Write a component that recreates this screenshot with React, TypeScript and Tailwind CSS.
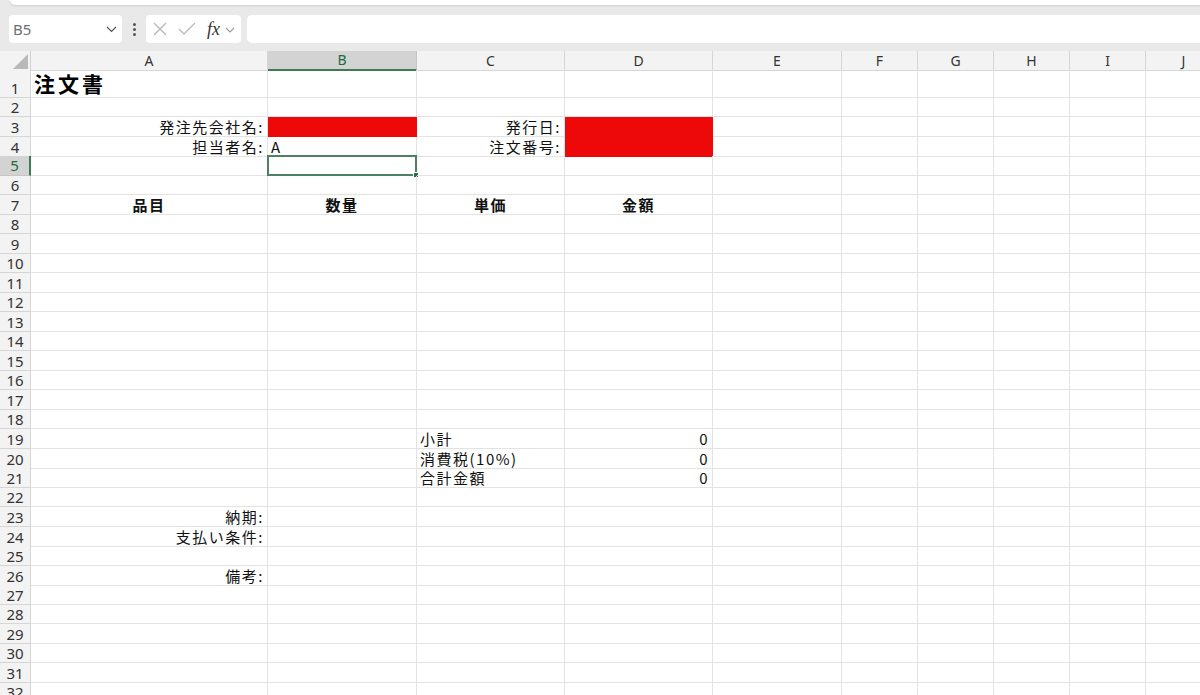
import React from "react"

type Cell = {
  t?: string
  a?: "l" | "r" | "c"
  b?: boolean
  title?: boolean
  red?: boolean
  merged?: boolean
  sel?: boolean
}

const COLS = ["A", "B", "C", "D", "E", "F", "G", "H", "I", "J"]
const GRID = "grid grid-cols-[31px_237px_149px_148px_148px_129px_76px_76px_76px_76px_76px]"

const cells: Record<string, Cell> = {
  A1: { t: "注文書", title: true },
  A3: { t: "発注先会社名:", a: "r" },
  B3: { red: true },
  C3: { t: "発行日:", a: "r" },
  D3: { red: true, merged: true },
  A4: { t: "担当者名:", a: "r" },
  B4: { t: "A" },
  C4: { t: "注文番号:", a: "r" },
  D4: { red: true },
  B5: { sel: true },
  A7: { t: "品目", a: "c", b: true },
  B7: { t: "数量", a: "c", b: true },
  C7: { t: "単価", a: "c", b: true },
  D7: { t: "金額", a: "c", b: true },
  C19: { t: "小計" },
  D19: { t: "0", a: "r" },
  C20: { t: "消費税(10%)" },
  D20: { t: "0", a: "r" },
  C21: { t: "合計金額" },
  D21: { t: "0", a: "r" },
  A23: { t: "納期:", a: "r" },
  A24: { t: "支払い条件:", a: "r" },
  A26: { t: "備考:", a: "r" },
}

function Chevron() {
  return (
    <svg width="11" height="7" viewBox="0 0 11 7" fill="none">
      <polyline points="1,1 5.5,5.5 10,1" stroke="#555" strokeWidth="1.2" />
    </svg>
  )
}

function Toolbar() {
  return (
    <div className="h-[51px] bg-[#e9e9e9] flex flex-col">
      <div className="h-[5px] ml-[10px] bg-white rounded-bl-[6px] shadow-[0_1px_2px_rgba(0,0,0,0.12)]" />
      <div className="flex items-center mt-[10px] h-[28px]">
        <div className="ml-[9px] w-[113px] h-full bg-white rounded-[4px] flex items-center justify-between pl-[4px] pr-[5px]">
          <span className="text-[15px] text-[#707070] font-['Noto_Sans',sans-serif]">B5</span>
          <Chevron />
        </div>
        <div className="w-[24px] flex flex-col items-center gap-[2px]">
          <span className="w-[3px] h-[3px] rounded-full bg-[#555]" />
          <span className="w-[3px] h-[3px] rounded-full bg-[#555]" />
          <span className="w-[3px] h-[3px] rounded-full bg-[#555]" />
        </div>
        <div className="w-[95px] h-full bg-white rounded-[4px] flex items-center pl-[7px]">
          <svg width="14" height="14" viewBox="0 0 14 14">
            <path d="M1 1 L13 13 M13 1 L1 13" stroke="#b5b5b5" strokeWidth="1.2" />
          </svg>
          <svg width="18" height="14" viewBox="0 0 18 14" className="ml-[11px]">
            <polyline points="1,7 6,12 17,1" fill="none" stroke="#b5b5b5" strokeWidth="1.2" />
          </svg>
          <span className="ml-[11px] italic text-[18px] leading-none text-[#333] font-['Liberation_Serif',serif]">fx</span>
          <span className="ml-[5px] mt-[1px]">
            <svg width="10" height="6" viewBox="0 0 10 6" fill="none">
              <polyline points="1,1 5,5 9,1" stroke="#999" strokeWidth="1.1" />
            </svg>
          </span>
        </div>
        <div className="ml-[6px] flex-1 h-full bg-white rounded-l-[5px]" />
      </div>
    </div>
  )
}

function HeaderRow() {
  return (
    <div className={GRID + " h-[19px]"}>
      <div className="bg-[#f3f3f3] border-r border-b border-[#d2d2d2] flex items-end justify-end pr-[2px] pb-[1px] overflow-hidden">
        <svg width="15" height="15" viewBox="0 0 15 15">
          <polygon points="15,0 15,15 0,15" fill="#b9b9b9" />
        </svg>
      </div>
      {COLS.map((c) => (
        <div
          key={c}
          className={
            c === "B"
              ? "bg-[#d3d3d3] border-r border-[#c6c6c6] border-b-2 border-b-[#3f7a57] flex items-center justify-center text-[14px] leading-[18px] text-[#1f6b3f] font-['Noto_Sans',sans-serif]"
              : "bg-[#f3f3f3] border-r border-b border-[#d6d6d6] flex items-center justify-center text-[14px] leading-[18px] text-[#333] font-['Noto_Sans',sans-serif]"
          }
        >
          {c}
        </div>
      ))}
    </div>
  )
}

function DataCell({ id }: { id: string }) {
  const c = cells[id]
  let cls = "relative flex items-center border-r border-b border-[#e3e3e3] overflow-visible whitespace-nowrap"
  if (c?.red) cls += " bg-[#ed0909] border-[#ed0909]"
  if (c?.merged) cls += " border-b-0"
  if (c?.title) cls += " items-end pb-[1px]"
  const align = c?.a === "r" ? " justify-end pr-[3px]" : c?.a === "c" ? " justify-center" : " justify-start pl-[3px]"
  cls += align
  return (
    <div className={cls}>
      {c?.t && (
        <span
          className={
            c.title
              ? "text-[21px] font-bold tracking-[3px] text-black leading-[26px]"
              : c.b
              ? "text-[15px] font-bold tracking-[1.5px] leading-[19px] text-[#111]"
              : "text-[15px] tracking-[1.5px] leading-[19px] text-[#111]"
          }
        >
          {c.t}
        </span>
      )}
      {c?.sel && (
        <div className="absolute left-[-1px] top-[-1px] right-[-1px] bottom-[-1px] border-2 border-[#4f8064]">
          <div className="absolute right-[-4px] bottom-[-4px] w-[6px] h-[6px] bg-[#217346] border border-white" />
        </div>
      )}
    </div>
  )
}

function Row({ n }: { n: number }) {
  const selected = n === 5
  return (
    <div className={GRID + (n === 1 ? " h-[27.5px]" : " h-[19.5px]")}>
      <div
        className={
          selected
            ? "bg-[#d3d3d3] border-r-2 border-r-[#3f7a57] border-b border-b-[#c6c6c6] flex items-center justify-center text-[15px] leading-[18px] text-[#1f6b3f] font-['Noto_Sans',sans-serif]"
            : "bg-[#f3f3f3] border-r border-b border-[#d6d6d6] flex items-end justify-center text-[15px] leading-[18px] text-[#333] font-['Noto_Sans',sans-serif] overflow-hidden"
        }
      >
        {n}
      </div>
      {COLS.map((c) => (
        <DataCell key={c} id={c + n} />
      ))}
    </div>
  )
}

export default function App() {
  const rows = Array.from({ length: 32 }, (_, i) => i + 1)
  return (
    <div className="w-[1200px] h-[695px] overflow-hidden bg-white font-['Noto_Sans_CJK_JP','Noto_Sans',sans-serif]">
      <Toolbar />
      <HeaderRow />
      {rows.map((n) => (
        <Row key={n} n={n} />
      ))}
    </div>
  )
}
